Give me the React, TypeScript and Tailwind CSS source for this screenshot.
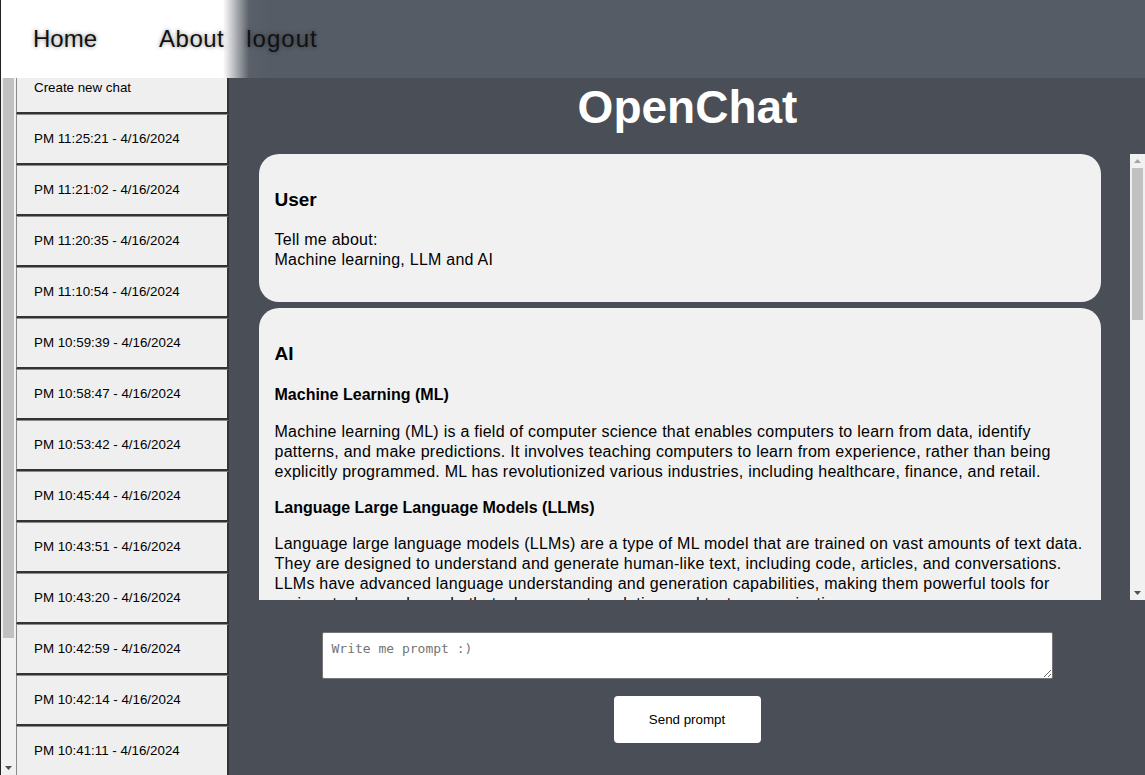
import React from "react";

const times = [
  "PM 11:25:21 - 4/16/2024",
  "PM 11:21:02 - 4/16/2024",
  "PM 11:20:35 - 4/16/2024",
  "PM 11:10:54 - 4/16/2024",
  "PM 10:59:39 - 4/16/2024",
  "PM 10:58:47 - 4/16/2024",
  "PM 10:53:42 - 4/16/2024",
  "PM 10:45:44 - 4/16/2024",
  "PM 10:43:51 - 4/16/2024",
  "PM 10:43:20 - 4/16/2024",
  "PM 10:42:59 - 4/16/2024",
  "PM 10:42:14 - 4/16/2024",
  "PM 10:41:11 - 4/16/2024",
];

const mlLines = [
  "Machine learning (ML) is a field of computer science that enables computers to learn from data, identify",
  "patterns, and make predictions. It involves teaching computers to learn from experience, rather than being",
  "explicitly programmed. ML has revolutionized various industries, including healthcare, finance, and retail.",
];

const llmLines = [
  "Language large language models (LLMs) are a type of ML model that are trained on vast amounts of text data.",
  "They are designed to understand and generate human-like text, including code, articles, and conversations.",
  "LLMs have advanced language understanding and generation capabilities, making them powerful tools for",
  "various tasks, such as chatbots, language translation, and text summarization.",
];

function SideButton({ label }: { label: string }) {
  return (
    <div className="flex h-[51px] w-[213px] shrink-0 items-center border-t border-l border-b-2 border-r-2 border-t-[#8a8a8a] border-l-[#8a8a8a] border-b-[#333333] border-r-[#333333] bg-[#efefef] pl-[17px] font-['Liberation_Sans',Arial,sans-serif] text-[13.33px] text-black">
      {label}
    </div>
  );
}

function Lines({ lines }: { lines: string[] }) {
  return (
    <p className="my-4 text-[16px] leading-5 tracking-[0.25px] whitespace-nowrap">
      {lines.map((l, i) => (
        <React.Fragment key={i}>
          {l}
          {i < lines.length - 1 && <br />}
        </React.Fragment>
      ))}
    </p>
  );
}

export default function App() {
  return (
    <div className="flex h-screen w-full flex-col overflow-hidden bg-[#4a4e56]">
      {/* nav */}
      <nav className="flex h-[78px] shrink-0 items-center border-l border-l-[#222] bg-[linear-gradient(to_right,#ffffff_222px,#5a606a_248px,#565c66_268px)] font-['Liberation_Sans',Arial,sans-serif] text-[24px] text-[#111] [text-shadow:0_0_4px_rgba(0,0,0,0.45)]">
        <span className="ml-[32px]">Home</span>
        <span className="ml-[62px] tracking-[0.5px]">About</span>
        <span className="ml-[22px] tracking-[1px]">logout</span>
      </nav>

      <div className="flex min-h-0 flex-1">
        {/* sidebar */}
        <aside className="flex h-full w-[229px] shrink-0 bg-white">
          <div className="w-px bg-[#222]" />
          <div className="flex w-[15px] flex-col bg-[#f1f1f1] px-[2px]">
            <div className="h-[560px] bg-[#c1c1c1]" />
            <div className="flex-1" />
            <div className="flex h-[14px] items-center justify-center">
              <svg width="7" height="4" viewBox="0 0 7 4">
                <polygon points="0,0 7,0 3.5,4" fill="#505050" />
              </svg>
            </div>
          </div>
          <div className="flex min-h-0 flex-1 flex-col overflow-hidden">
            <div className="mt-[-15px] flex flex-col">
              <SideButton label="Create new chat" />
              {times.map((t) => (
                <SideButton key={t} label={t} />
              ))}
            </div>
          </div>
        </aside>

        {/* main */}
        <main className="flex min-w-0 flex-1 flex-col">
          <h1 className="flex h-[76px] shrink-0 items-center justify-center pb-[18px] pl-px font-['Liberation_Sans',Arial,sans-serif] text-[46px] font-bold text-white">
            OpenChat
          </h1>

          <div className="flex h-[446px] shrink-0">
            <div className="flex min-w-0 flex-1 flex-col items-center gap-[6px] overflow-hidden font-['Liberation_Sans',Arial,sans-serif] text-black">
              <div className="w-[842px] shrink-0 rounded-[20px] bg-[#f1f1f1] px-4 py-4">
                <h3 className="my-[19px] text-[19px] leading-[22px] font-bold">User</h3>
                <p className="my-4 text-[16px] leading-5 tracking-[0.25px]">
                  Tell me about:
                  <br />
                  Machine learning, LLM and AI
                </p>
              </div>
              <div className="w-[842px] shrink-0 rounded-[20px] bg-[#f1f1f1] px-4 py-4">
                <h3 className="mt-[19px] mb-[20px] text-[19px] leading-[22px] font-bold">AI</h3>
                <h4 className="mt-4 mb-[17px] text-[16px] leading-5 font-bold">Machine Learning (ML)</h4>
                <Lines lines={mlLines} />
                <h4 className="my-4 text-[16px] leading-5 font-bold">Language Large Language Models (LLMs)</h4>
                <Lines lines={llmLines} />
              </div>
            </div>
            {/* scrollbar */}
            <div className="flex w-[15px] shrink-0 flex-col bg-[#f1f1f1] px-[2px]">
              <div className="flex h-[14px] items-center justify-center">
                <svg width="7" height="4" viewBox="0 0 7 4">
                  <polygon points="0,4 7,4 3.5,0" fill="#a3a3a3" />
                </svg>
              </div>
              <div className="h-[152px] bg-[#c1c1c1]" />
              <div className="flex-1" />
              <div className="flex h-[14px] items-center justify-center">
                <svg width="7" height="4" viewBox="0 0 7 4">
                  <polygon points="0,0 7,0 3.5,4" fill="#505050" />
                </svg>
              </div>
            </div>
          </div>

          <div className="flex flex-col items-center pt-[32px]">
            <textarea
              className="h-[47px] w-[731px] rounded-[2px] border border-[#767676] bg-white px-[9px] py-[8px] font-['DejaVu_Sans_Mono',monospace] text-[13px] leading-[16px] text-black outline-none placeholder:text-[#757575]"
              placeholder="Write me prompt :)"
            />
            <button className="mt-[17px] h-[47px] w-[147px] rounded-[4px] bg-white font-['Liberation_Sans',Arial,sans-serif] text-[13.33px] text-black">
              Send prompt
            </button>
          </div>
        </main>
      </div>
    </div>
  );
}
